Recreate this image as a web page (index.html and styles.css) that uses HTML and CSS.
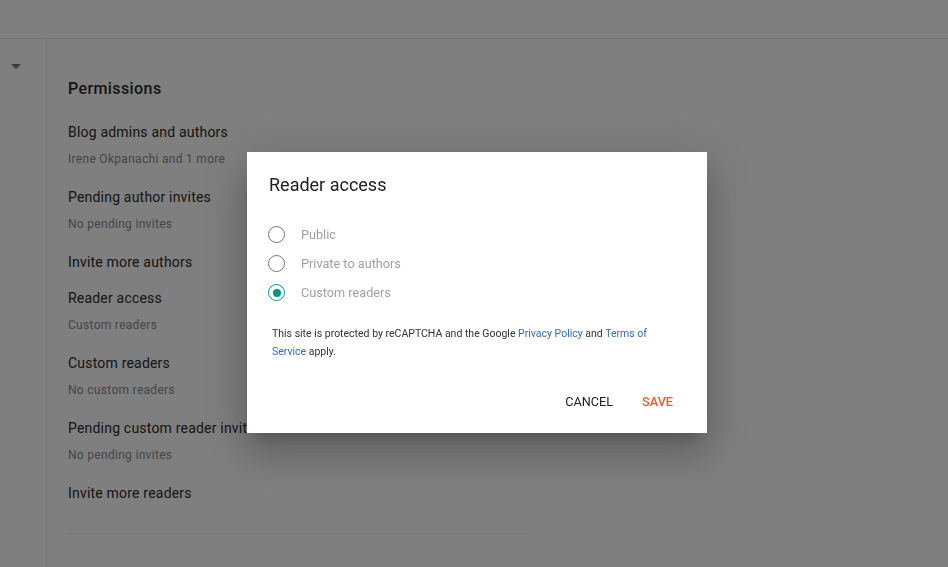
FILE: index.html
```html
<!DOCTYPE html>
<html lang="en">
<head>
<meta charset="utf-8">
<title>Settings - Permissions</title>
<link rel="stylesheet" href="styles.css">
</head>
<body>
<div class="app">
  <header class="topbar"></header>
  <div class="main">
    <aside class="sidebar">
      <span class="caret"></span>
    </aside>
    <section class="content">
      <h2 class="section-title">Permissions</h2>
      <div class="setting">
        <div class="setting-title">Blog admins and authors</div>
        <div class="setting-value">Irene Okpanachi and 1 more</div>
      </div>
      <div class="setting">
        <div class="setting-title">Pending author invites</div>
        <div class="setting-value">No pending invites</div>
      </div>
      <div class="setting">
        <div class="setting-title">Invite more authors</div>
      </div>
      <div class="setting">
        <div class="setting-title">Reader access</div>
        <div class="setting-value">Custom readers</div>
      </div>
      <div class="setting">
        <div class="setting-title">Custom readers</div>
        <div class="setting-value">No custom readers</div>
      </div>
      <div class="setting">
        <div class="setting-title">Pending custom reader invites</div>
        <div class="setting-value">No pending invites</div>
      </div>
      <div class="setting">
        <div class="setting-title">Invite more readers</div>
      </div>
      <hr class="divider">
    </section>
  </div>
</div>

<div class="scrim">
  <div class="dialog" role="dialog" aria-labelledby="dlg-title">
    <h3 class="dialog-title" id="dlg-title">Reader access</h3>
    <div class="options">
      <label class="option"><span class="radio"></span><span class="option-label">Public</span></label>
      <label class="option"><span class="radio"></span><span class="option-label">Private to authors</span></label>
      <label class="option"><span class="radio checked"></span><span class="option-label">Custom readers</span></label>
    </div>
    <p class="notice">This site is protected by reCAPTCHA and the Google <a href="#">Privacy Policy</a> and <a href="#">Terms of Service</a> apply.</p>
    <div class="actions">
      <button class="btn">CANCEL</button>
      <button class="btn btn-primary">SAVE</button>
    </div>
  </div>
</div>
</body>
</html>
```

FILE: styles.css
```css
* { box-sizing: border-box; }

html, body {
  margin: 0;
  height: 100%;
  background: #ffffff;
  font-family: Roboto, "Liberation Sans", Arial, sans-serif;
  color: #212121;
  overflow: hidden;
}

.app {
  display: flex;
  flex-direction: column;
  height: 100%;
}

.topbar {
  height: 39px;
  flex: none;
  border-bottom: 1px solid #e8e8e8;
}

.main {
  display: flex;
  flex: 1;
}

.sidebar {
  width: 47px;
  flex: none;
  border-right: 1px solid #e8e8e8;
  padding: 25px 0 0 11px;
}

.caret {
  display: block;
  width: 0;
  height: 0;
  border-left: 5px solid transparent;
  border-right: 5px solid transparent;
  border-top: 5px solid #757575;
}

.content {
  padding: 39px 0 0 21px;
  width: 481px;
}

.section-title {
  margin: 0 0 22px;
  font-size: 16px;
  font-weight: 500;
  letter-spacing: 0.4px;
  line-height: 22px;
  color: #2a2a2a;
}

.setting {
  padding: 0 0 16px;
}

.setting-title {
  font-size: 14px;
  line-height: 20px;
  letter-spacing: 0.2px;
  color: #2a2a2a;
  white-space: nowrap;
}

.setting-value {
  font-size: 12px;
  line-height: 20px;
  letter-spacing: 0.3px;
  margin: 6px 0 2px;
  padding-top: 1px;
  color: #8a8a8a;
}

.divider {
  margin: 14px 0 0;
  border: 0;
  border-top: 1px solid #eeeeee;
}

/* modal layer */
.scrim {
  position: fixed;
  inset: 0;
  background: rgba(0, 0, 0, 0.5);
}

.dialog {
  position: absolute;
  left: 247px;
  top: 152px;
  width: 460px;
  height: 281px;
  background: #fff;
  box-shadow: 0 11px 15px -7px rgba(0,0,0,0.2), 0 24px 38px 3px rgba(0,0,0,0.14), 0 9px 46px 8px rgba(0,0,0,0.12);
  padding: 21px 26px 14px 22px;
  display: flex;
  flex-direction: column;
}

.dialog-title {
  margin: 0;
  font-size: 18px;
  font-weight: 400;
  line-height: 24px;
  color: #212121;
}

.options {
  margin-top: 23px;
  display: flex;
  flex-direction: column;
}

.option {
  display: flex;
  align-items: center;
  height: 29px;
}

.radio {
  width: 17px;
  height: 17px;
  border: 1.5px solid #757575;
  border-radius: 50%;
  margin-left: -1px;
  flex: none;
  display: flex;
  align-items: center;
  justify-content: center;
}

.radio.checked {
  border-color: #009688;
}

.radio.checked::after {
  content: "";
  width: 8px;
  height: 8px;
  border-radius: 50%;
  background: #009688;
}

.option-label {
  margin-left: 16px;
  font-size: 12.7px;
  color: #a0a0a0;
}

.notice {
  margin: 18px 0 0 3px;
  font-size: 10.5px;
  line-height: 18px;
  color: #333;
}

.notice a {
  color: #3367d6;
  text-decoration: none;
}

.actions {
  margin-top: auto;
  display: flex;
  justify-content: flex-end;
  gap: 13px;
}

.btn {
  height: 36px;
  padding: 0 8px;
  background: none;
  border: 0;
  font-family: inherit;
  font-size: 12.7px;
  font-weight: 400;
  color: #212121;
}

.btn-primary {
  color: #ff5722;
  font-weight: 500;
}
```
